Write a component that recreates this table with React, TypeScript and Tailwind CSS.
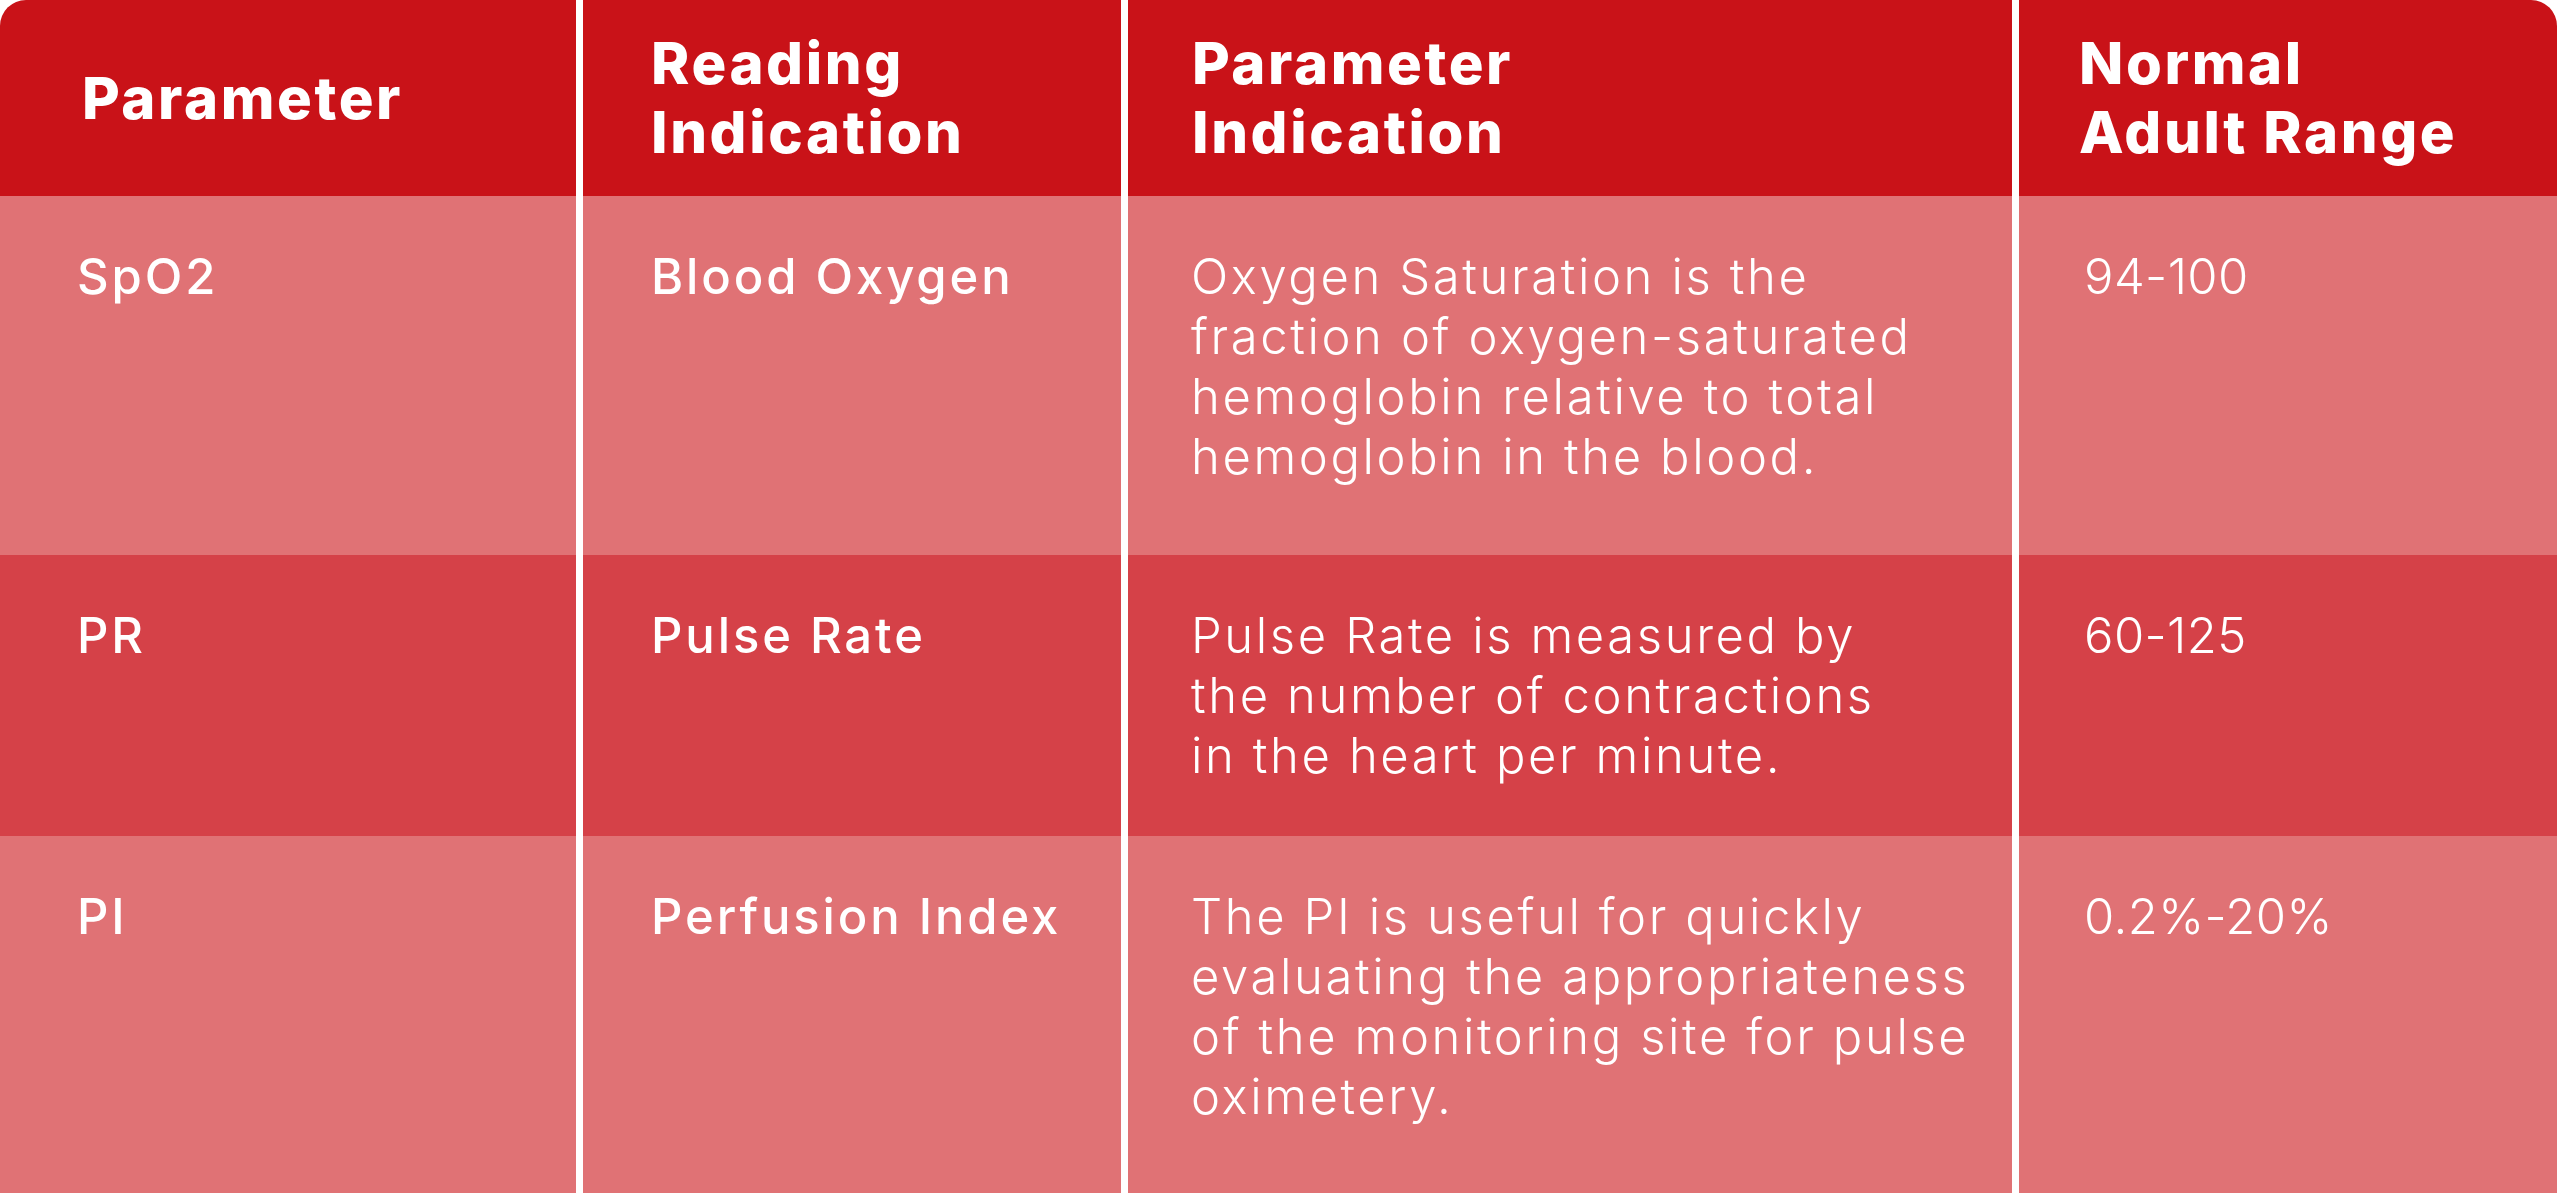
import React from "react";

const font = "font-['Inter','Noto_Sans',sans-serif]";

function HeadCell({ lines, pl, rounded }: { lines: string[]; pl: string; rounded?: string }) {
  return (
    <div className={`h-[196px] bg-[#c91218] flex items-center ${pl} ${rounded ?? ""}`}>
      <div className="text-white font-extrabold text-[58px] leading-[69px] tracking-[2.6px]">
        {lines.map((l, i) => (
          <div key={i}>{l}</div>
        ))}
      </div>
    </div>
  );
}

function BodyCell({
  lines,
  pl,
  bg,
  h,
  kind,
}: {
  lines: string[];
  pl: string;
  bg: string;
  h: string;
  kind: "medium" | "light" | "num";
}) {
  const cls =
    kind === "medium"
      ? "font-medium tracking-[2.9px]"
      : kind === "light"
      ? "font-light tracking-[2.6px]"
      : "font-light tracking-[0.4px]";
  return (
    <div className={`${bg} ${h} ${pl} pt-[51px]`}>
      <div className={`text-white text-[49px] leading-[60px] ${cls}`}>
        {lines.map((l, i) => (
          <div key={i} className="whitespace-nowrap">
            {l}
          </div>
        ))}
      </div>
    </div>
  );
}

const rows = [
  {
    bg: "bg-[#e07275]",
    h: "h-[359px]",
    c1: ["SpO2"],
    c2: ["Blood Oxygen"],
    c3: [
      "Oxygen Saturation is the",
      "fraction of oxygen-saturated",
      "hemoglobin relative to total",
      "hemoglobin in the blood.",
    ],
    c4: ["94-100"],
  },
  {
    bg: "bg-[#d54148]",
    h: "h-[281px]",
    c1: ["PR"],
    c2: ["Pulse Rate"],
    c3: ["Pulse Rate is measured by", "the number of contractions", "in the heart per minute."],
    c4: ["60-125"],
  },
  {
    bg: "bg-[#e07275]",
    h: "h-[357px]",
    c1: ["PI"],
    c2: ["Perfusion Index"],
    c3: [
      "The PI is useful for quickly",
      "evaluating the appropriateness",
      "of the monitoring site for pulse",
      "oximetery.",
    ],
    c4: ["0.2%-20%"],
  },
];

export default function App() {
  return (
    <div className={`w-[2560px] h-[1195px] bg-white ${font}`}>
      <div className="w-[2558px] grid grid-cols-[576px_538px_884px_538px] gap-x-[7px] bg-white">
        <HeadCell lines={["Parameter"]} pl="pl-[82px]" rounded="rounded-tl-[26px]" />
        <HeadCell lines={["Reading", "Indication"]} pl="pl-[68px]" />
        <HeadCell lines={["Parameter", "Indication"]} pl="pl-[64px]" />
        <HeadCell lines={["Normal", "Adult Range"]} pl="pl-[60px]" rounded="rounded-tr-[26px]" />
        {rows.map((r, i) => (
          <React.Fragment key={i}>
            <BodyCell lines={r.c1} pl="pl-[77px]" bg={r.bg} h={r.h} kind="medium" />
            <BodyCell lines={r.c2} pl="pl-[68px]" bg={r.bg} h={r.h} kind="medium" />
            <BodyCell lines={r.c3} pl="pl-[63px]" bg={r.bg} h={r.h} kind="light" />
            <BodyCell lines={r.c4} pl="pl-[65px]" bg={r.bg} h={r.h} kind="num" />
          </React.Fragment>
        ))}
      </div>
    </div>
  );
}
